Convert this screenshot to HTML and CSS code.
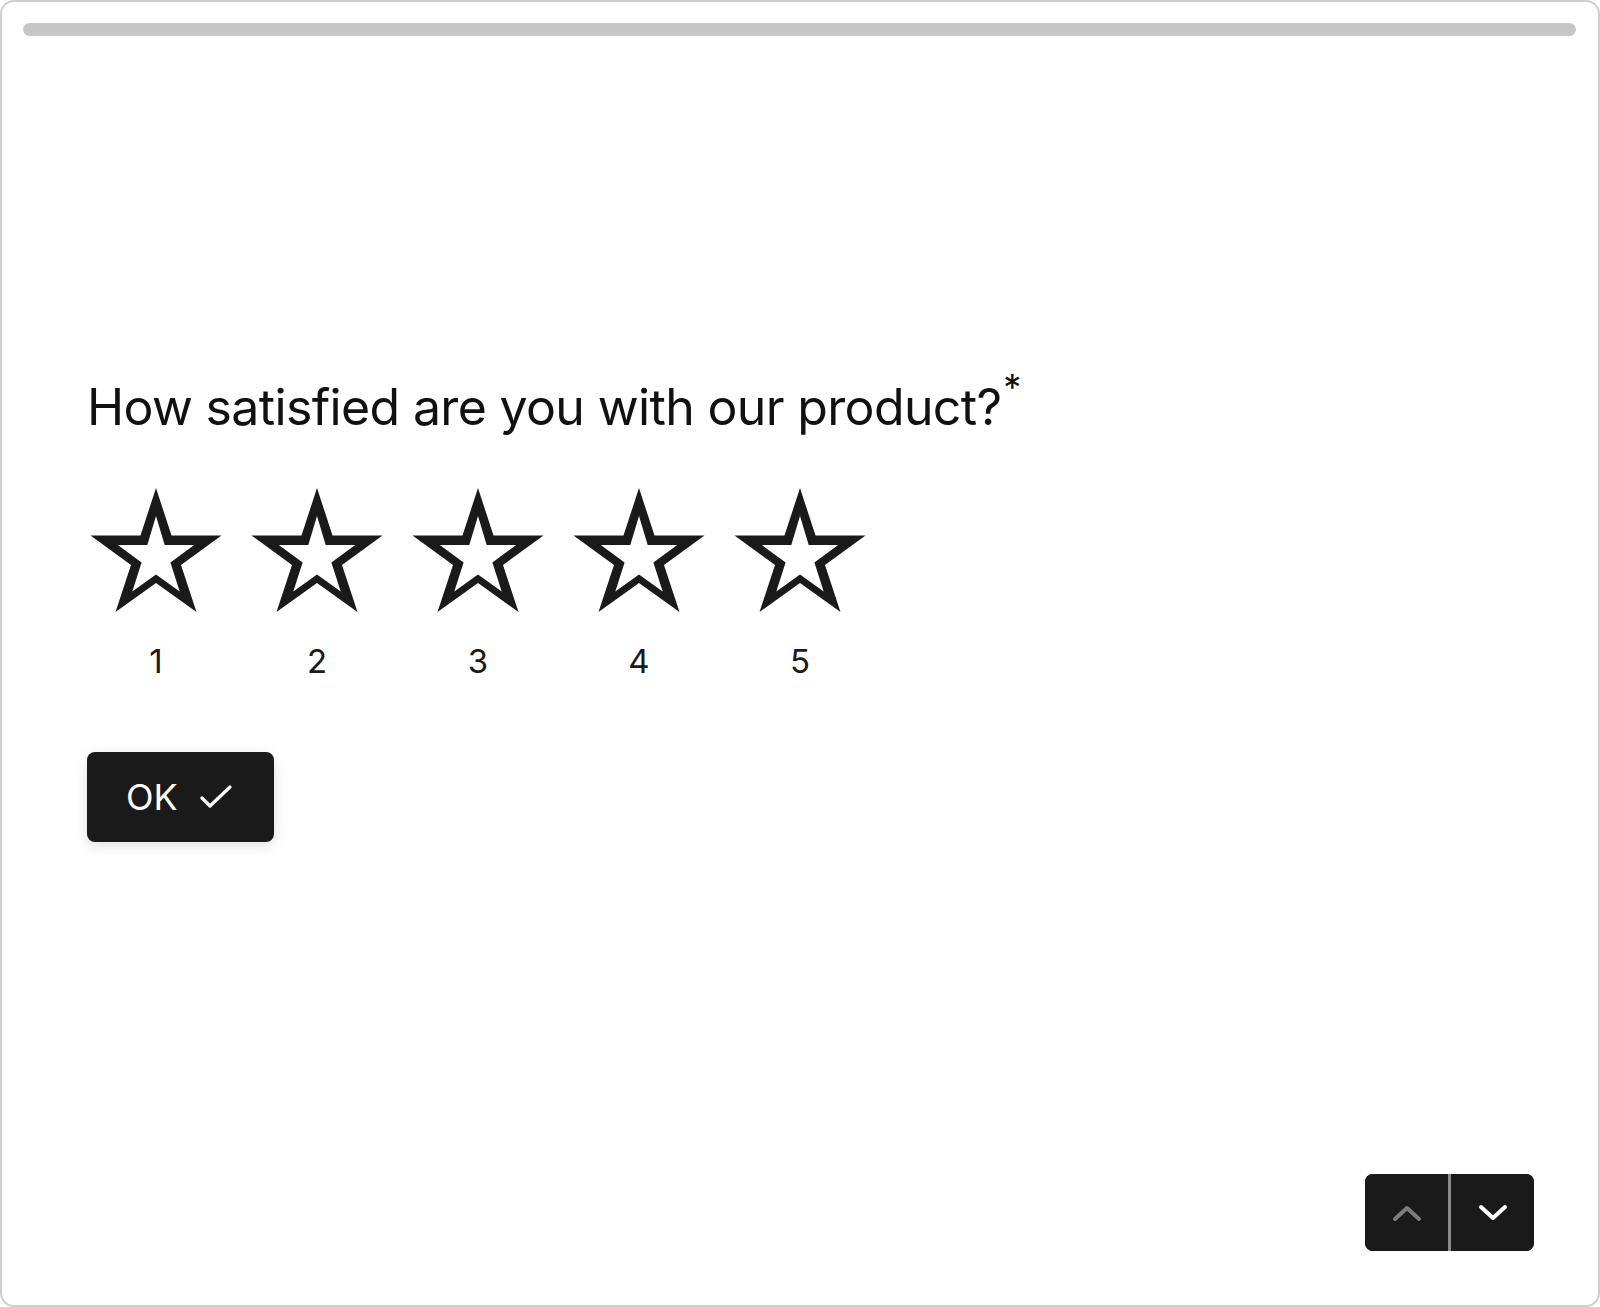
FILE: index.html
```html
<!DOCTYPE html>
<html lang="en">
<head>
<meta charset="utf-8">
<title>Survey</title>
<link rel="stylesheet" href="styles.css">
</head>
<body>
<div class="frame">
  <div class="progress"></div>
  <main class="main">
    <div class="question">
      <h1 class="title">How satisfied are you with our product?<span class="req">*</span></h1>
      <div class="rating">
        <div class="opt">
          <svg class="star" viewBox="0 0 132 124" width="132" height="124"><path fill-rule="evenodd" d="M66 0L81.5 47.5H131.5L91 77L106.5 124L66 95L25.5 124L41 77L0.5 47.5H50.5Z M66 28L57.3 57H27.8L51.6 74.4L42.3 103.5L66 86.5L89.7 103.5L80.4 74.4L104.2 57H74.7Z"/></svg>
          <span class="num">1</span>
        </div>
        <div class="opt">
          <svg class="star" viewBox="0 0 132 124" width="132" height="124"><path fill-rule="evenodd" d="M66 0L81.5 47.5H131.5L91 77L106.5 124L66 95L25.5 124L41 77L0.5 47.5H50.5Z M66 28L57.3 57H27.8L51.6 74.4L42.3 103.5L66 86.5L89.7 103.5L80.4 74.4L104.2 57H74.7Z"/></svg>
          <span class="num">2</span>
        </div>
        <div class="opt">
          <svg class="star" viewBox="0 0 132 124" width="132" height="124"><path fill-rule="evenodd" d="M66 0L81.5 47.5H131.5L91 77L106.5 124L66 95L25.5 124L41 77L0.5 47.5H50.5Z M66 28L57.3 57H27.8L51.6 74.4L42.3 103.5L66 86.5L89.7 103.5L80.4 74.4L104.2 57H74.7Z"/></svg>
          <span class="num">3</span>
        </div>
        <div class="opt">
          <svg class="star" viewBox="0 0 132 124" width="132" height="124"><path fill-rule="evenodd" d="M66 0L81.5 47.5H131.5L91 77L106.5 124L66 95L25.5 124L41 77L0.5 47.5H50.5Z M66 28L57.3 57H27.8L51.6 74.4L42.3 103.5L66 86.5L89.7 103.5L80.4 74.4L104.2 57H74.7Z"/></svg>
          <span class="num">4</span>
        </div>
        <div class="opt">
          <svg class="star" viewBox="0 0 132 124" width="132" height="124"><path fill-rule="evenodd" d="M66 0L81.5 47.5H131.5L91 77L106.5 124L66 95L25.5 124L41 77L0.5 47.5H50.5Z M66 28L57.3 57H27.8L51.6 74.4L42.3 103.5L66 86.5L89.7 103.5L80.4 74.4L104.2 57H74.7Z"/></svg>
          <span class="num">5</span>
        </div>
      </div>
      <button class="ok" type="button">OK
        <svg class="check" viewBox="0 0 32 24" width="32" height="24"><path d="M2 13L10 21L30 2" fill="none" stroke="#fff" stroke-width="3.2" stroke-linecap="round" stroke-linejoin="round"/></svg>
      </button>
    </div>
  </main>
  <footer class="footer">
    <div class="nav">
      <button class="navbtn up" type="button" aria-label="Previous">
        <svg viewBox="0 0 30 18" width="30" height="18"><path d="M3 15L15 4L27 15" fill="none" stroke="#7d7d7d" stroke-width="4" stroke-linecap="round" stroke-linejoin="round"/></svg>
      </button>
      <span class="divider"></span>
      <button class="navbtn down" type="button" aria-label="Next">
        <svg viewBox="0 0 30 18" width="30" height="18"><path d="M3 3L15 14L27 3" fill="none" stroke="#ffffff" stroke-width="4" stroke-linecap="round" stroke-linejoin="round"/></svg>
      </button>
    </div>
  </footer>
</div>
</body>
</html>
```

FILE: styles.css
```css
* { box-sizing: border-box; }

html, body {
  margin: 0;
  padding: 0;
  background: #ffffff;
}

body {
  font-family: Inter, "Liberation Sans", Arial, sans-serif;
  color: #111111;
}

.frame {
  width: 1600px;
  height: 1307px;
  border: 2px solid #cfcfcf;
  border-radius: 14px;
  display: flex;
  flex-direction: column;
  background: #ffffff;
}

.progress {
  margin: 21px 22px 0 21px;
  height: 13px;
  border-radius: 7px;
  background: #c6c6c6;
  flex: none;
}

.main {
  flex: 1;
  padding: 341px 0 0 85px;
}

.question {
  display: flex;
  flex-direction: column;
  align-items: flex-start;
}

.title {
  margin: 0;
  font-weight: 400;
  font-size: 50px;
  line-height: 60px;
  letter-spacing: -0.65px;
  color: #111111;
}

.req {
  font-size: 36px;
  vertical-align: 25px;
  line-height: 0;
  margin-left: 2px;
}

.rating {
  display: flex;
  gap: 29px;
  margin-top: 51px;
  margin-left: 3px;
}

.opt {
  width: 132px;
  display: flex;
  flex-direction: column;
  align-items: center;
}

.star {
  display: block;
  fill: #1a1a1a;
}

.num {
  margin-top: 30px;
  font-size: 33px;
  line-height: 38px;
  color: #1a1a1a;
}

.ok {
  margin-top: 72px;
  height: 90px;
  padding: 0 42px 0 39px;
  display: flex;
  align-items: center;
  gap: 22px;
  background: #1a1a1a;
  color: #ffffff;
  border: none;
  border-radius: 8px;
  font-family: Inter, "Liberation Sans", Arial, sans-serif;
  font-size: 36px;
  font-weight: 400;
  box-shadow: 0 4px 14px rgba(0, 0, 0, 0.12);
}

.check { display: block; }

.footer {
  flex: none;
  display: flex;
  justify-content: flex-end;
  padding: 0 64px 54px 0;
}

.nav {
  display: flex;
  height: 77px;
  background: #1a1a1a;
  border-radius: 8px;
  overflow: hidden;
}

.navbtn {
  width: 83px;
  height: 77px;
  border: none;
  background: #1a1a1a;
  display: flex;
  align-items: center;
  justify-content: center;
  padding: 0;
}

.navbtn svg { display: block; }

.divider {
  width: 3px;
  background: #8a8a8a;
}
```
